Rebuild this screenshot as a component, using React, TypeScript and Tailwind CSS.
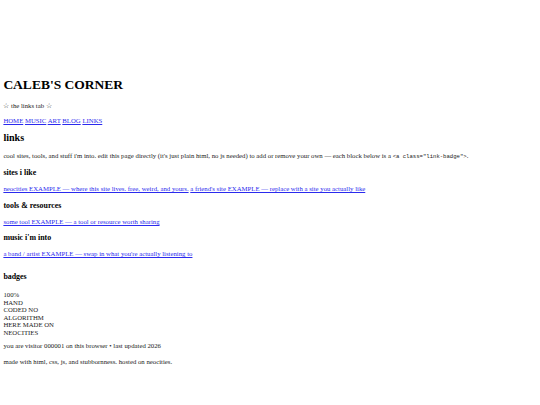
import React from "react";

export default function App() {
  const link = "text-[#2a2aee] underline";
  const h3 = "text-[7.9px] font-bold leading-[normal] my-[7.9px] text-black";
  return (
    <div className="bg-white w-[540px] h-[405px] overflow-hidden">
      <div
        className="px-[3.375px] pt-[68px] text-[6.75px] leading-[normal] text-[#222]"
        style={{ fontFamily: '"Liberation Serif", "Times New Roman", serif' }}
      >
        <h1 className="text-[13.5px] font-bold leading-[normal] my-[9.05px] text-black">CALEB'S CORNER</h1>
        <p className="my-[6.75px]">☆ the links tab ☆</p>
        <p className="my-[6.75px]">
          <a className={link}>HOME</a> <a className={link}>MUSIC</a> <a className={link}>ART</a>{" "}
          <a className={link}>BLOG</a> <a className={link}>LINKS</a>
        </p>
        <h2 className="text-[10.125px] font-bold leading-[normal] my-[8.4px] text-black">links</h2>
        <p className="my-[6.75px]">
          cool sites, tools, and stuff i'm into. edit this page directly (it's just plain html, no js needed) to add or
          remove your own — each block below is a{" "}
          <code className="text-[5.625px]" style={{ fontFamily: '"Liberation Mono", "Courier New", monospace' }}>
            &lt;a class="link-badge"&gt;
          </code>
          .
        </p>
        <h3 className="text-[7.9px] font-bold leading-[normal] mt-[7.9px] mb-[8.9px] text-black">sites i like</h3>
        <div className="mt-[6.75px] mb-[8.9px]">
          <a className={link}>neocities EXAMPLE — where this site lives. free, weird, and yours.</a>{" "}
          <a className={link}>a friend's site EXAMPLE — replace with a site you actually like</a>
        </div>
        <h3 className={h3}>tools &amp; resources</h3>
        <div className="my-[6.75px]">
          <a className={link}>some tool EXAMPLE — a tool or resource worth sharing</a>
        </div>
        <h3 className={h3}>music i'm into</h3>
        <div className="my-[6.75px]">
          <a className={link}>a band / artist EXAMPLE — swap in what you're actually listening to</a>
        </div>
        <h3 className="text-[7.9px] font-bold leading-[normal] mt-[15px] mb-[7.9px] text-black">badges</h3>
        <div className="mt-[10px] leading-[7.6px]">
          <div>100%</div>
          <div>HAND</div>
          <div>CODED NO</div>
          <div>ALGORITHM</div>
          <div>HERE MADE ON</div>
          <div>NEOCITIES</div>
        </div>
        <p className="mt-[5px] mb-[6.75px]">you are visitor 000001 on this browser • last updated 2026</p>
        <p className="mt-[9px] mb-[6.75px]">made with html, css, js, and stubbornness. hosted on neocities.</p>
      </div>
    </div>
  );
}
